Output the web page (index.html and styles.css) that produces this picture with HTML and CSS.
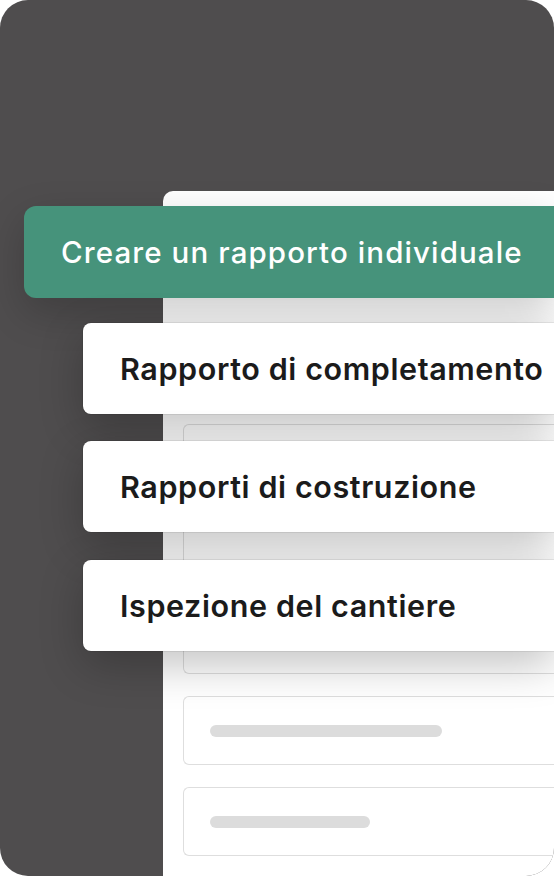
FILE: index.html
```html
<!DOCTYPE html>
<html lang="it">
<head>
  <meta charset="UTF-8">
  <meta name="viewport" content="width=device-width, initial-scale=1.0">
  <title>Rapporti</title>
  <link rel="stylesheet" href="styles.css">
</head>
<body>

<div class="frame">
  <!-- PANNELLO DI SFONDO -->
  <div class="panel">
    <div class="box box-tall"></div>
    <div class="box"><span class="bar"></span></div>
    <div class="box"><span class="bar bar-short"></span></div>
    <div class="box"></div>
  </div>

  <!-- MENU SOPRA IL PANNELLO -->
  <div class="menu">
    <div class="menu-main">Creare un rapporto individuale</div>
    <div class="menu-item">Rapporto di completamento</div>
    <div class="menu-item">Rapporti di costruzione</div>
    <div class="menu-item">Ispezione del cantiere</div>
  </div>
</div>

</body>
</html>
```

FILE: styles.css
```css
body { margin: 0; padding: 0; background: #fff; font-family: Inter, "Noto Sans", Arial, sans-serif; }

.frame {
  width: 554px;
  height: 876px;
  background: #4f4d4e;
  border-radius: 28px;
  overflow: hidden;
  position: relative;
}

/* PANNELLO */
.panel {
  margin: 191px 0 0 163px;
  height: 700px;
  background: #fff;
  border-top-left-radius: 10px;
  padding: 233px 0 0 20px;
  display: flex;
  flex-direction: column;
  gap: 22px;
  box-sizing: border-box;
}
.box {
  flex-shrink: 0;
  height: 67px;
  border: 1px solid #dedede;
  border-right: none;
  border-radius: 6px 0 0 6px;
  padding-left: 26px;
  display: flex;
  align-items: center;
}
.box-tall { height: 248px; }
.bar { display: block; width: 232px; height: 12px; border-radius: 6px; background: #dcdcdc; }
.bar-short { width: 160px; }

/* MENU */
.menu {
  position: absolute;
  top: 206px;
  left: 24px;
  right: 0;
  display: flex;
  flex-direction: column;
}
.menu-main {
  height: 92px;
  background: #46937b;
  color: #fff;
  font-size: 29.5px;
  font-weight: 500;
  letter-spacing: 1.1px;
  border-radius: 12px 0 0 12px;
  padding-left: 37px;
  display: flex;
  align-items: center;
  box-shadow: 0 14px 40px rgba(0, 0, 0, 0.2);
  margin-bottom: 25px;
}
.menu-item {
  height: 91px;
  margin-left: 59px;
  margin-bottom: 27px;
  background: #fff;
  color: #1b1b1b;
  font-size: 30.5px;
  font-weight: 600;
  letter-spacing: 0.6px;
  border-radius: 8px 0 0 8px;
  padding-left: 37px;
  display: flex;
  align-items: center;
  box-shadow: 0 0 0 1px rgba(0, 0, 0, 0.07), 0 14px 44px rgba(0, 0, 0, 0.24);
}
.menu-item:last-child { margin-top: 1px; }
```
